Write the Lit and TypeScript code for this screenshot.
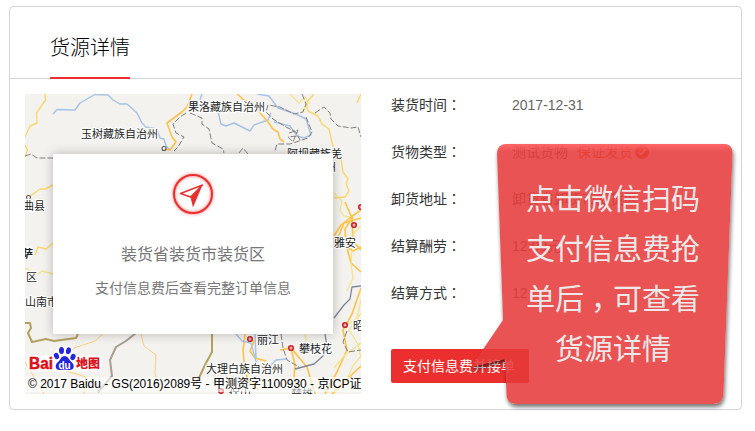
import { LitElement, html, svg, css } from "lit";
import { customElement } from "lit/decorators.js";

type Line = [kind: string, points: string];
type Place = [x: number, y: number, text: string];

const ROADS: Line[] = [
  ["y", "45,94 45.5,100 36.5,113 37,123 30,126 25,137"],
  ["y", "25,145 27.5,150 25,157"],
  ["y", "29,197 40,189 45,189 53,185"],
  ["y", "35,255 38,247 46,249 53,243"],
  ["py", "25,268 31,271 38,274 42,271 53,274"],
  ["b", "53,114 57,109.500 75,110 80,103 95,94.500 108,95 113,100 120,104 127,104 137,113 142,123 146,127 157,129 160,138 164,139 166,146 170,150"],
  ["o", "192,94 187,107 182,112 167,123 172,137 176,142 170,150 165,149"],
  ["b", "202,94 200,100 204,105"],
  ["b", "217,107 221,124 226,126 234,123 250,131 254,125 268,120 271,113"],
  ["b", "257,94 269,96 278,108 296,114 306,119 311,135 304,138 297,136 290,126 274,122"],
  ["o", "237,94 244,100 253,104 261,114 268,122 273,129 278,132 280,139 284,142"],
  ["py", "290,94 299,103 305,97 309,103 302,111"],
  ["y", "314,94 306,103 308,111 318,116 322,124 329,129 333,147 341,159 343,172 348,179 346,184 349,191 345,197 334,198"],
  ["y", "361,94 357,103"],
  ["g", "190,113 202,118 202,124 209,129 212,143 223,149 224,153"],
  ["g", "239,153 243,148 248,154"],
  ["g", "302,94 306,104 303,112 294,114 280,107 268,105 266,112 273,119 286,127 296,132 300,140"],
  ["g", "306,117 312,132 308,138 290,144 277,144 275,151"],
  ["g", "289,133 298,130 293,142 288,137 297,136"],
  ["g", "315,113 324,107 330,113 331,119 338,126 351,128 358,127 361,137"],
  ["g", "186,113 180,117 173,124 176,133 184,137 178,147 174,151"],
  ["g", "25,156 31,154 37,158 53,158"],
  ["py", "334,193 342,201 340,210 344,216 353,218"],
  ["o", "334,236 341,225 351,217 361,210"],
  ["o", "361,218 344,223 337,240 347,248 351,263 361,272"],
  ["o", "353,217 345,229 346,246 353,251 361,247"],
  ["o", "345,202 352,218 353,241 361,250"],
  ["py", "335,244 347,240 361,226"],
  ["py", "352,250 351,264 353,278 347,291"],
  ["g2", "361,286 352,287 350,299 344,305 334,318"],
  ["o", "361,288 352,314 343,330 347,350 337,372 325,394"],
  ["py", "361,313 349,330 358,344 361,358"],
  ["py", "361,300 357,318 347,325"],
  ["o", "361,366 344,382 332,394"],
  ["py", "361,356 353,366 346,381 334,394"],
  ["py", "334,368 345,355 361,343"],
  ["py", "307,344 305,334 297,325"],
  ["o", "245,334 243,351 245,371 249,382 259,390"],
  ["o", "250,340 254,341 250,351 255,358 266,361"],
  ["o", "291,348 307,367 315,394"],
  ["o", "280,350 291,348 295,365 294,377 299,394"],
  ["b", "236,334 242,341 251,343 257,365 270,366 276,360 286,359"],
  ["b", "255,334 256,358"],
  ["g", "281,334 283,348 287,360 299,367"],
  ["g2", "295,369 314,364 323,356 327,347 325,334"],
  ["g", "347,331 343,342 348,352 361,350"],
  ["k", "212,334 212,352 206,363 196,384"],
  ["k", "25,323 30,323 31,328 28,333 32,342 46,339 54,341 76,338 78,334"],
  ["br", "136,333 126,341 116,347 110,360 112,376 98,392"],
  ["oy", "103,334 95,341 74,348 61,366"],
  ["oy", "141,334 144,346 156,355 155,374 160,392"],
  ["oy", "54,367 86,377 84,394"],
  ["oy", "25,362 34,377 44,394"],
];

const PLACES: Place[] = [
  [188, 111, "果洛藏族自治州"],
  [81, 138, "玉树藏族自治州"],
  [287, 158, "阿坝藏族羌"],
  [292, 171, "族自治州"],
  [23, 210, "曲县"],
  [334, 247, "雅安"],
  [26, 281, "区"],
  [25, 306, "山南市"],
  [257, 344, "丽江"],
  [299, 353, "攀枝花"],
  [353, 330, "昭通"],
  [206, 373, "大理白族自治州"],
  [229, 398, "保山"],
  [291, 398, "楚雄"],
];

const DOTS = [[250, 339], [291, 348], [345, 325], [354, 225], [361, 207], [221, 391]];

@customElement("cargo-map")
export class CargoMap extends LitElement {
  static styles = css`
    :host { display: grid; grid-template: 300px / 336px; flex: none; width: 336px; height: 300px; overflow: hidden; }
    .canvas, .cover, .credit { grid-area: 1 / 1; }
    .canvas { display: block; width: 336px; height: 300px; background: #f3f2ef; }
    polyline { fill: none; stroke-linejoin: round; }
    .y { stroke: #fcd76c; stroke-width: 1.4; }
    .py { stroke: #f5e38a; stroke-width: 1.3; }
    .oy { stroke: #fbd07a; stroke-width: 1; }
    .o { stroke: #ffc247; stroke-width: 1.6; }
    .b { stroke: #a6c3e3; stroke-width: 1.4; }
    .g { stroke: #808080; stroke-width: 1; stroke-dasharray: 6 2; }
    .g2 { stroke: #7c8798; stroke-width: 1.3; }
    .k { stroke: #b3a160; stroke-width: 2; }
    .br { stroke: #a89d8f; stroke-width: 2; }
    .place { font: 11px "Noto Sans CJK SC", sans-serif; fill: #222; stroke: #fff; stroke-width: 2.5px; paint-order: stroke; stroke-linejoin: round; }
    .place.bold { font-weight: 700; }
    .dot { fill: #f7aaa5; stroke: #c22b30; stroke-width: 1.6; }
    .ring { fill: #fff; stroke: #555; stroke-width: 1.1; }
    .halo { stroke: #fff; stroke-width: 5px; stroke-linejoin: round; fill: #fff; }
    .logo { font: 700 16px "Liberation Sans", sans-serif; fill: #dc1018; stroke: #dc1018; stroke-width: .5px; }
    .cn { font: 900 12px "Noto Sans CJK SC", sans-serif; fill: #dc1018; }
    .du { font: 700 10px "Liberation Sans", sans-serif; fill: #fff; }
    .paw { fill: #2525dc; }
    .cover {
      place-self: center; box-sizing: border-box; width: 280px; height: 180px; background: #fff; z-index: 1;
      box-shadow: 0 0 10px rgba(0, 0, 0, .25); display: flex; flex-direction: column; align-items: center; padding-top: 15px;
      font-family: "Liberation Sans", "Noto Sans CJK SC", sans-serif; font-weight: 400; color: #777;
    }
    .compass { width: 50px; height: 50px; }
    .city { font-size: 16px; line-height: 24px; margin-top: 24px; }
    .hint { font-size: 14px; line-height: 20px; margin-top: 11px; }
    .credit {
      align-self: end; margin-bottom: 2px; box-sizing: border-box; padding-left: 3px; width: 336px; height: 15px; line-height: 15px;
      white-space: nowrap; overflow: hidden; font-family: "Liberation Sans", "Noto Sans CJK SC", sans-serif; font-size: 12px;
      font-weight: 400; color: #000; background: rgba(255, 255, 255, .6);
    }
  `;

  render() {
    return html`
      <svg class="canvas" viewBox="25 94 336 300">
        ${ROADS.map(([k, p]) => svg`<polyline class=${k} points=${p}></polyline>`)}
        <circle class="ring" cx="164" cy="148.500" r="2"></circle>
        <circle class="ring" cx="28.500" cy="197.500" r="2"></circle>
        ${PLACES.map(([x, y, t]) => svg`<text class="place" x=${x} y=${y}>${t}</text>`)}
        <text class="place bold" x="22" y="258">萨</text>
        ${DOTS.map(([x, y]) => svg`<circle class="dot" cx=${x} cy=${y} r="2.300"></circle>`)}
        <rect class="halo" x="30" y="358" width="69" height="11"></rect>
        <circle class="halo" cx="64.500" cy="358" r="9"></circle>
        <text class="logo" x="29" y="369" textLength="24" lengthAdjust="spacingAndGlyphs">Bai</text>
        <ellipse class="paw" cx="56.500" cy="356" rx="2.500" ry="3.200" transform="rotate(-20 56.500 356)"></ellipse>
        <ellipse class="paw" cx="61.500" cy="350.500" rx="2.500" ry="3.500"></ellipse>
        <ellipse class="paw" cx="68.500" cy="350.800" rx="2.500" ry="3.500" transform="rotate(12 68.500 350.800)"></ellipse>
        <ellipse class="paw" cx="73" cy="357" rx="2.500" ry="3.200" transform="rotate(20 73 357)"></ellipse>
        <path class="paw" d="M64.500 356C61 356 60.500 360 58 362C55 364 54.500 370 59.500 370Q64.500 369 69.500 370C74.500 370 75 365 71.500 362C69 360 68 356 64.500 356Z"></path>
        <text class="du" x="58.500" y="368.500" textLength="12">du</text>
        <text class="cn" x="76" y="368">地图</text>
      </svg>
      <div class="cover">
        <svg class="compass" viewBox="0 0 50 50">
          <defs><filter id="glow" x="-20%" y="-20%" width="140%" height="140%"><feGaussianBlur stdDeviation="1.500"></feGaussianBlur></filter></defs>
          <circle cx="25" cy="25" r="19" fill="none" stroke="#ee3030" stroke-opacity=".5" stroke-width="3" filter="url(#glow)"></circle>
          <circle cx="25" cy="25" r="19" fill="none" stroke="#eb2f2f" stroke-width="2"></circle>
          <path d="M34.500 16L25 38.500L22.500 28Z" fill="#eb2f2f"></path>
          <path d="M34.500 16L12.500 24.500L22.500 28Z" fill="none" stroke="#eb2f2f" stroke-width="1.400" stroke-linejoin="round"></path>
        </svg>
        <div class="city">装货省装货市装货区</div>
        <div class="hint">支付信息费后查看完整订单信息</div>
      </div>
      <div class="credit">© 2017 Baidu - GS(2016)2089号 - 甲测资字1100930 - 京ICP证030173号</div>
    `;
  }
}

@customElement("pay-callout")
export class PayCallout extends LitElement {
  static styles = css`
    :host { display: block; }
    .shape { display: block; width: 285px; height: 285px; }
    .message {
      position: absolute; left: 60px; top: 32px; width: 186px; text-align: center; color: #eee9e9;
      font: 400 29px/50px "Noto Sans CJK SC", sans-serif; white-space: nowrap;
    }
    .comma { position: relative; left: 7px; }
  `;

  render() {
    const d = "M47 4H263Q273 4 272.500 14L263.500 254Q263 264 253 264H57Q47 264 46.500 255L45 219L11 227L43 180L37 14Q37 4 47 4Z";
    return html`
      <svg class="shape" viewBox="0 0 285 285">
        <defs>
          <filter id="cast" x="-10%" y="-10%" width="120%" height="120%">
            <feGaussianBlur in="SourceAlpha" stdDeviation="2.300" result="b"></feGaussianBlur>
            <feOffset in="b" dx="1" dy="3" result="o"></feOffset>
            <feComposite in="o" in2="SourceAlpha" operator="out"></feComposite>
          </filter>
          <linearGradient id="shine" x1="0" y1="0" x2="0" y2="1">
            <stop offset="0" stop-color="#ff6668"></stop>
            <stop offset=".03" stop-color="#ff6668" stop-opacity="0"></stop>
          </linearGradient>
        </defs>
        <path d=${d} filter="url(#cast)" opacity=".55"></path>
        <path d=${d} fill="#e63a3a" fill-opacity=".87"></path>
        <path d=${d} fill="url(#shine)"></path>
      </svg>
      <div class="message">点击微信扫码<br />支付信息费抢<br />单后<span class="comma">，</span>可查看<br />货源详情</div>
    `;
  }
}

@customElement("app-root")
export class AppRoot extends LitElement {
  static styles = css`
    :host {
      display: block; position: relative; box-sizing: border-box; height: 431px; padding: 6px 13px 0 9px; background: #fff; overflow: hidden;
      font-family: "Liberation Sans", "Noto Sans CJK SC", sans-serif; font-size: 14px; font-weight: 400;
    }
    .card { box-sizing: border-box; height: 404px; border: 1px solid #d0d5e0; border-radius: 4px; }
    .head { box-sizing: border-box; height: 72px; border-bottom: 1px solid #d0d5e0; padding-left: 40px; display: flex; }
    .title { box-sizing: border-box; height: 72px; border-bottom: 2px solid #eb2f2f; font-size: 20px; line-height: 82px; font-weight: 300; color: #000; }
    .body { display: flex; gap: 30px; padding: 15px 0 0 15px; }
    .facts { display: flex; flex-direction: column; align-items: flex-start; }
    .row { display: flex; height: 22px; line-height: 22px; margin-bottom: 25px; }
    .label { width: 121px; color: #333; }
    .colon { font-family: "Noto Sans CJK TC", sans-serif; line-height: 1; }
    .value { color: #666; }
    .promise { color: #e07020; margin-left: 9px; display: inline-flex; align-items: center; gap: 2px; }
    .check { width: 14px; height: 14px; }
    .pay {
      width: 138px; height: 34px; margin-top: 20px; border: 0; border-radius: 2px; padding: 0 2px 2px 0; background: #eb2f2f; color: #fff;
      font: inherit;
    }
    .tip { position: absolute; left: 460px; top: 140px; }
  `;

  render() {
    const promise = html`<span class="promise">保证发货<svg class="check" viewBox="0 0 14 14"><circle cx="7" cy="7" r="7" fill="#e07020"></circle><path d="M3.500 7L6 9.500L10.500 4.500" fill="none" stroke="#fff" stroke-width="1.800"></path></svg></span>`;
    const rows: [string, unknown][] = [
      ["装货时间", "2017-12-31"],
      ["货物类型", html`测试货物${promise}`],
      ["卸货地址", "卸货省卸货市卸货区"],
      ["结算酬劳", "12.00元"],
      ["结算方式", "12"],
    ];
    return html`
      <section class="card">
        <header class="head"><div class="title">货源详情</div></header>
        <div class="body">
          <cargo-map></cargo-map>
          <div class="facts">
            ${rows.map(([k, v]) => html`<div class="row"><span class="label">${k}<span class="colon">：</span></span><span class="value">${v}</span></div>`)}
            <button class="pay">支付信息费并接单</button>
          </div>
        </div>
      </section>
      <pay-callout class="tip"></pay-callout>
    `;
  }
}
